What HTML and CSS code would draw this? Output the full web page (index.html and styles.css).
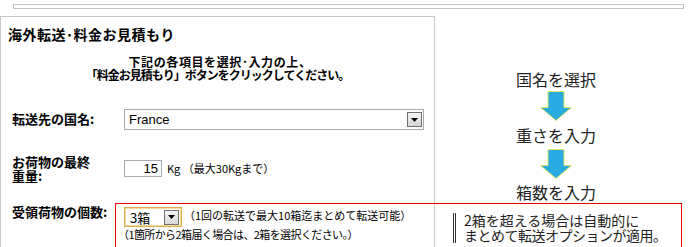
FILE: index.html
```html
<!DOCTYPE html>
<html lang="ja">
<head>
<meta charset="utf-8">
<title>海外転送・料金お見積もり</title>
<link rel="stylesheet" href="styles.css">
</head>
<body>
<div class="topbar"></div>
<div class="main">
  <section class="panel">
    <h1 class="title">海外転送･料金お見積もり</h1>
    <p class="intro"><span class="l1">下記の各項目を選択･入力の上、</span><span class="l2">「料金お見積もり」ボタンをクリックしてください。</span></p>
    <div class="row row-country">
      <div class="label">転送先の国名:</div>
      <div class="select wide"><span class="val">France</span><span class="btn"><svg width="7" height="4" viewBox="0 0 7 4"><path d="M0 0H7L3.5 4Z" fill="#000"/></svg></span></div>
    </div>
    <div class="row row-weight">
      <div class="label two">お荷物の最終<br>重量:</div>
      <div class="field">
        <span class="input">15</span><span class="unit">Kg （最大30Kgまで）</span>
      </div>
    </div>
    <div class="row row-count">
      <div class="label narrow">受領荷物の個数:</div>
      <div class="field col">
        <div class="line">
          <div class="select small"><span class="val jp">3箱</span><span class="btn"><svg width="7" height="4" viewBox="0 0 7 4"><path d="M0 0H7L3.5 4Z" fill="#000"/></svg></span></div>
          <span class="note1">（1回の転送で最大10箱迄まとめて転送可能）</span>
        </div>
        <div class="note2">（1箇所から2箱届く場合は、2箱を選択ください。）</div>
      </div>
    </div>
  </section>
  <aside class="right">
    <div class="steps">
      <div class="step">国名を選択</div>
      <svg class="arrow a1" width="34" height="30" viewBox="0 0 34 30"><path d="M9 0.5H25V16.5H32.5L17 29.5L1.5 16.5H9Z" fill="#29abe2" stroke="#dfe56a" stroke-width="1"/></svg>
      <div class="step s2">重さを入力</div>
      <svg class="arrow a2" width="34" height="30" viewBox="0 0 34 30"><path d="M9 0.5H25V16.5H32.5L17 29.5L1.5 16.5H9Z" fill="#29abe2" stroke="#dfe56a" stroke-width="1"/></svg>
      <div class="step s3">箱数を入力</div>
    </div>
    <div class="note"><span class="n1">2箱を超える場合は自動的に</span><span class="n2">まとめて転送オプションが適用。</span></div>
  </aside>
</div>
<div class="redbox"></div>
</body>
</html>
```
FILE: styles.css
```css
html, body {
  margin: 0;
  background: #fff;
}
body {
  font-family: "Noto Sans CJK JP", sans-serif;
  color: #000;
  position: relative;
  width: 700px;
  height: 247px;
  overflow: hidden;
}
.topbar {
  margin: 4px 0 0 13px;
  width: 671px;
  height: 5px;
  box-sizing: border-box;
  border: 1px solid #c4c4c4;
}
.main {
  display: flex;
  margin-top: 7px;
  height: 231px;
  overflow: hidden;
}
.panel {
  width: 435px;
  height: 231px;
  box-sizing: border-box;
  border: 1px solid #c8c8c8;
  border-bottom: none;
  flex: none;
}
.title {
  margin: 0;
  padding: 8px 0 0 7px;
  font-size: 14px;
  font-weight: bold;
  line-height: 18px;
  letter-spacing: 0.5px;
}
.intro {
  margin: 12px 0 0;
  text-align: center;
  font-size: 12px;
  font-weight: bold;
  line-height: 14px;
}
.intro span { display: block; }
.intro .l1 { letter-spacing: 0.6px; padding-left: 5px; }
.intro .l2 { letter-spacing: -1px; margin-top: -1px; }
.row {
  display: flex;
  padding-left: 11px;
}
.label {
  width: 112px;
  flex: none;
  font-size: 13px;
  font-weight: bold;
  line-height: 16px;
}
.label.two { line-height: 14px; margin-top: -1px; }
.label.narrow { width: 104px; }
.row-country { margin-top: 27px; }
.row-country .label { padding-top: 2px; }
.select {
  display: flex;
  align-items: center;
  justify-content: space-between;
  box-sizing: border-box;
  border: 1px solid #a5acb2;
  background: #fff;
}
.select.wide { width: 300px; height: 21px; }
.select .val {
  padding-left: 4px;
  font-family: "Liberation Sans", sans-serif;
  font-size: 13px;
  line-height: 15px;
  color: #000;
}
.select .val.jp { font-family: "Noto Sans CJK JP", sans-serif; padding-left: 5px; }
.select .btn {
  width: 15px;
  height: 15px;
  margin-right: 1px;
  box-sizing: border-box;
  border: 1px solid #6f6f6f;
  background: linear-gradient(#f4f4f4, #d6d6d6);
  display: flex;
  align-items: center;
  justify-content: center;
}
.row-weight { margin-top: 26px; }
.field { display: flex; align-items: flex-start; }
.input {
  margin-top: 4px;
  width: 38px;
  height: 17px;
  box-sizing: border-box;
  border: 1px solid #a5acb2;
  text-align: right;
  padding-right: 3px;
  font-family: "Liberation Sans", sans-serif;
  font-size: 13px;
  line-height: 15px;
}
.unit {
  margin: 4px 0 0 5px;
  font-size: 11px;
  line-height: 17px;
}
.row-count { margin-top: 21px; }
.field.col { flex-direction: column; }
.line { display: flex; align-items: flex-start; }
.select.small {
  width: 58px;
  height: 20px;
  margin: 3px 0 0 8px;
  border: 1px solid #dcae54;
  box-shadow: inset 0 0 0 1px #f6dc9c;
  padding-right: 1px;
}
.note1 {
  margin: 3px 0 0 2px;
  font-size: 11px;
  line-height: 16px;
  white-space: nowrap;
}
.note2 {
  margin-left: 2px;
  font-size: 11px;
  line-height: 14px;
  letter-spacing: -0.6px;
  white-space: nowrap;
}
.right { flex: 1; }
.steps {
  width: 242px;
  padding-top: 53px;
  display: flex;
  flex-direction: column;
  align-items: center;
}
.step {
  font-size: 16px;
  line-height: 20px;
  color: #222;
}
.arrow { display: block; }
.a1 { margin-top: 2px; }
.s2 { margin-top: 4px; }
.a2 { margin-top: 4px; }
.s3 { margin-top: 3px; }
.note {
  margin: 11px 0 0 18px;
  border-left: 3px double #333;
  padding-left: 8px;
  font-size: 14px;
  line-height: 15px;
  color: #222;
  white-space: nowrap;
}
.note span { display: block; }
.note .n2 { letter-spacing: -0.5px; }
.redbox {
  position: absolute;
  left: 115px;
  top: 203px;
  width: 567px;
  height: 44px;
  box-sizing: border-box;
  border: 1px solid #e60000;
  border-bottom: none;
  pointer-events: none;
}
```
